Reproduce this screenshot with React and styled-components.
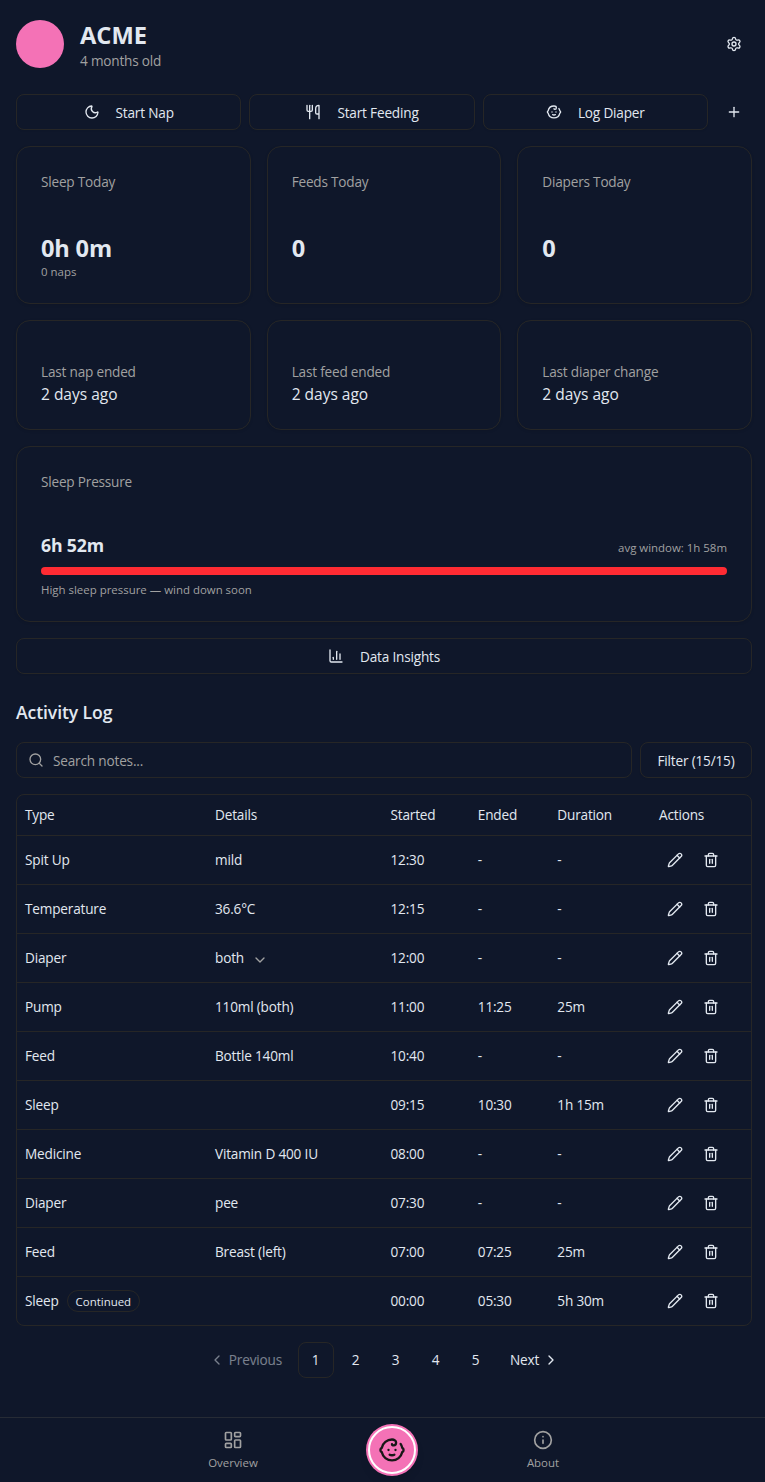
import React from "react";
import styled, { createGlobalStyle } from "styled-components";
import {
  Baby,
  ChartColumn,
  ChevronDown,
  ChevronLeft,
  ChevronRight,
  Info,
  LayoutDashboard,
  Moon,
  Pencil,
  Plus,
  Search,
  Settings,
  Trash2,
  Utensils,
} from "lucide-react";

const GlobalStyle = createGlobalStyle`
  * {
    box-sizing: border-box;
  }

  body {
    margin: 0;
    background: #0f172a;
    color: #e2e8f0;
    font-family: "Open Sans", "Noto Sans", sans-serif;
    font-size: 13.6px;
    letter-spacing: -0.18px;
    line-height: 20px;
    overflow: hidden;
  }

  button,
  input {
    font: inherit;
    letter-spacing: inherit;
    color: inherit;
  }

  svg {
    flex-shrink: 0;
  }
`;

const Page = styled.div`
  display: flex;
  flex-direction: column;
  height: 1482px;
`;

const Main = styled.main`
  flex: 1;
  display: flex;
  flex-direction: column;
  gap: 16px;
  width: 768px;
  padding: 16px 16px 0;
`;

const Header = styled.header`
  display: flex;
  align-items: center;
  gap: 16px;
  height: 56px;
  margin-bottom: 6px;
`;

const Avatar = styled.div`
  width: 48px;
  height: 48px;
  border-radius: 50%;
  background: #f472b6;
`;

const Who = styled.div`
  flex: 1;
  padding-top: 1px;
`;

const Name = styled.h1`
  margin: 0;
  font-size: 23.7px;
  font-weight: 700;
  letter-spacing: 0;
  line-height: 32px;
`;

const Muted = styled.div`
  color: #a1a1a1;
  font-size: ${(p) => (p.$small ? "11.45px" : "13.6px")};
  letter-spacing: ${(p) => (p.$small ? "0" : "-0.2px")};
  line-height: ${(p) => (p.$small ? "16px" : "20px")};
`;

const Row = styled.div`
  display: flex;
  gap: 8px;
`;

const Button = styled.button`
  display: flex;
  align-items: center;
  justify-content: center;
  gap: 16px;
  height: 36px;
  flex: ${(p) => (p.$grow ? "1 1 0" : "none")};
  min-width: 112px;
  padding: 1px 15px 0;
  border: 1px solid #262626;
  border-radius: 8px;
  background: transparent;
  box-shadow: 0 1px 2px #0000000d;

  svg {
    margin-top: -2px;
  }
`;

const IconButton = styled.button`
  display: flex;
  align-items: center;
  justify-content: center;
  width: ${(p) => p.$size || 36}px;
  height: ${(p) => p.$size || 36}px;
  padding: 0;
  border: none;
  background: transparent;
`;

const Cards = styled.div`
  display: grid;
  grid-template-columns: repeat(3, 1fr);
  gap: 16px;
`;

const Card = styled.section`
  display: flex;
  flex-direction: column;
  height: ${(p) => p.$height}px;
  padding: 25px 24px;
  border: 1px solid #262626;
  border-radius: 14px;
  box-shadow: 0 1px 3px #0000001a;
`;

const Stat = styled.div`
  margin-top: 40px;
  font-size: 23.6px;
  font-weight: 700;
  line-height: 32px;
`;

const Last = styled.div`
  margin-top: 16px;
`;

const When = styled.div`
  font-size: 15.5px;
  letter-spacing: 0;
  line-height: 24px;
`;

const Pressure = styled.div`
  display: flex;
  align-items: flex-end;
  justify-content: space-between;
  margin-top: 40px;
  height: 33px;
`;

const Awake = styled.div`
  font-size: 17.7px;
  font-weight: 700;
  line-height: 27px;
  padding-bottom: 4px;
`;

const Bar = styled.div`
  height: 8px;
  margin: 4px 0 7px;
  flex-shrink: 0;
  border-radius: 4px;
  background: #ff2b33;
`;

const Window = styled(Muted)`
  padding-bottom: 6px;
  line-height: 18px;
`;

const Title = styled.h2`
  margin: 8px 0 -1px;
  font-size: 17.6px;
  font-weight: 600;
  letter-spacing: -0.1px;
  line-height: 29px;
`;

const SearchBox = styled.label`
  flex: 1;
  display: flex;
  align-items: center;
  gap: 9px;
  height: 36px;
  padding: 0 11px;
  border: 1px solid #262626;
  border-radius: 8px;
  color: #a1a1a1;

  input {
    flex: 1;
    padding: 2px 0 0;
    border: none;
    outline: none;
    background: transparent;
  }

  input::placeholder {
    color: #a1a1a1;
    opacity: 1;
  }
`;

const Table = styled.div`
  border: 1px solid #262626;
  border-radius: 8px;
`;

const TableRow = styled.div`
  display: grid;
  grid-template-columns: 190px 175.5px 87.3px 79.5px 101.7px 100px;
  align-items: center;
  height: ${(p) => (p.$head ? 41 : 49)}px;
  border-bottom: 1px solid #262626;

  &:last-child {
    height: 48px;
    border-bottom: none;
  }
`;

const Cell = styled.div`
  display: flex;
  align-items: center;
  gap: ${(p) => p.$gap || 8}px;
  padding: 0 8px;
  white-space: nowrap;
`;

const Expand = styled(ChevronDown)`
  color: #a1a1a1;
  margin-top: 3px;
`;

const Badge = styled.span`
  height: 22px;
  padding: 1px 8px 0;
  border: 1px solid #262626;
  border-radius: 11px;
  font-size: 11.45px;
  letter-spacing: 0;
  line-height: 20px;
`;

const Pagination = styled.nav`
  display: flex;
  justify-content: center;
  gap: 4px;
`;

const PageLink = styled.button`
  display: flex;
  align-items: center;
  justify-content: center;
  gap: 4px;
  width: ${(p) => (p.$wide ? "auto" : "36px")};
  height: 36px;
  padding: ${(p) => (p.$wide ? "0 11px" : "0 1px 0 0")};
  border: 1px solid ${(p) => (p.$active ? "#262626" : "transparent")};
  border-radius: 8px;
  background: transparent;
  opacity: ${(p) => (p.disabled ? 0.5 : 1)};
`;

const TabBar = styled.nav`
  display: grid;
  grid-template-columns: 206px 54px 1fr 54px 195px;
  align-items: center;
  height: 65px;
  border-top: 1px solid #262b35;
`;

const Tab = styled.a`
  display: flex;
  flex-direction: column;
  align-items: center;
  gap: 4px;
  grid-column: ${(p) => p.$col};
  padding-top: 1px;
  color: #a1a1a1;
  font-size: 11.45px;
  letter-spacing: 0;
  line-height: 18px;
`;

const BabyButton = styled.button`
  display: flex;
  align-items: center;
  justify-content: center;
  justify-self: center;
  width: 48px;
  height: 48px;
  padding: 0;
  margin-left: 8px;
  border: 2px solid #fff;
  border-radius: 50%;
  background: #f472b6;
  color: #171717;
  box-shadow: 0 0 0 2px #f472b6, 0 6px 10px #0000001a;
`;

const stats = [
  { label: "Sleep Today", value: "0h 0m", note: "0 naps" },
  { label: "Feeds Today", value: "0" },
  { label: "Diapers Today", value: "0" },
];

const lastEvents = ["Last nap ended", "Last feed ended", "Last diaper change"];

const log = [
  { type: "Spit Up", details: "mild", start: "12:30" },
  { type: "Temperature", details: "36.6°C", start: "12:15" },
  { type: "Diaper", details: "both", start: "12:00", expandable: true },
  { type: "Pump", details: "110ml (both)", start: "11:00", end: "11:25", duration: "25m" },
  { type: "Feed", details: "Bottle 140ml", start: "10:40" },
  { type: "Sleep", start: "09:15", end: "10:30", duration: "1h 15m" },
  { type: "Medicine", details: "Vitamin D 400 IU", start: "08:00" },
  { type: "Diaper", details: "pee", start: "07:30" },
  { type: "Feed", details: "Breast (left)", start: "07:00", end: "07:25", duration: "25m" },
  { type: "Sleep", start: "00:00", end: "05:30", duration: "5h 30m", continued: true },
];

const LogRow = ({ entry }) => (
  <TableRow>
    <Cell>
      {entry.type}
      {entry.continued && <Badge>Continued</Badge>}
    </Cell>
    <Cell>
      {entry.details}
      {entry.expandable && <Expand size={16} />}
    </Cell>
    <Cell>{entry.start}</Cell>
    <Cell>{entry.end || "-"}</Cell>
    <Cell>{entry.duration || "-"}</Cell>
    <Cell $gap={4}>
      <IconButton $size={32} aria-label="Edit">
        <Pencil size={16} />
      </IconButton>
      <IconButton $size={32} aria-label="Delete">
        <Trash2 size={16} />
      </IconButton>
    </Cell>
  </TableRow>
);

export default () => {
  return (
    <Page>
      <GlobalStyle />
      <Main>
        <Header>
          <Avatar />
          <Who>
            <Name>ACME</Name>
            <Muted>4 months old</Muted>
          </Who>
          <IconButton aria-label="Settings">
            <Settings size={16} />
          </IconButton>
        </Header>

        <Row>
          <Button $grow>
            <Moon size={16} /> Start Nap
          </Button>
          <Button $grow>
            <Utensils size={16} /> Start Feeding
          </Button>
          <Button $grow>
            <Baby size={16} /> Log Diaper
          </Button>
          <IconButton aria-label="Add">
            <Plus size={16} />
          </IconButton>
        </Row>

        <Cards>
          {stats.map((s) => (
            <Card key={s.label} $height={158}>
              <Muted>{s.label}</Muted>
              <Stat>{s.value}</Stat>
              {s.note && <Muted $small>{s.note}</Muted>}
            </Card>
          ))}
        </Cards>

        <Cards>
          {lastEvents.map((label) => (
            <Card key={label} $height={110}>
              <Last>
                <Muted>{label}</Muted>
                <When>2 days ago</When>
              </Last>
            </Card>
          ))}
        </Cards>

        <Card $height={176}>
          <Muted>Sleep Pressure</Muted>
          <Pressure>
            <Awake>6h 52m</Awake>
            <Window $small>avg window: 1h 58m</Window>
          </Pressure>
          <Bar />
          <Muted $small>High sleep pressure — wind down soon</Muted>
        </Card>

        <Button>
          <ChartColumn size={16} /> Data Insights
        </Button>

        <Title>Activity Log</Title>

        <Row>
          <SearchBox>
            <Search size={16} />
            <input placeholder="Search notes..." />
          </SearchBox>
          <Button>Filter (15/15)</Button>
        </Row>

        <Table>
          <TableRow $head>
            <Cell>Type</Cell>
            <Cell>Details</Cell>
            <Cell>Started</Cell>
            <Cell>Ended</Cell>
            <Cell>Duration</Cell>
            <Cell>Actions</Cell>
          </TableRow>
          {log.map((entry) => (
            <LogRow key={entry.start} entry={entry} />
          ))}
        </Table>

        <Pagination>
          <PageLink $wide disabled>
            <ChevronLeft size={16} /> Previous
          </PageLink>
          <PageLink $active>1</PageLink>
          <PageLink>2</PageLink>
          <PageLink>3</PageLink>
          <PageLink>4</PageLink>
          <PageLink>5</PageLink>
          <PageLink $wide>
            Next <ChevronRight size={16} />
          </PageLink>
        </Pagination>
      </Main>

      <TabBar>
        <Tab $col={2}>
          <LayoutDashboard size={20} />
          Overview
        </Tab>
        <BabyButton aria-label="Baby">
          <Baby size={28} />
        </BabyButton>
        <Tab $col={4}>
          <Info size={20} />
          About
        </Tab>
      </TabBar>
    </Page>
  );
};
